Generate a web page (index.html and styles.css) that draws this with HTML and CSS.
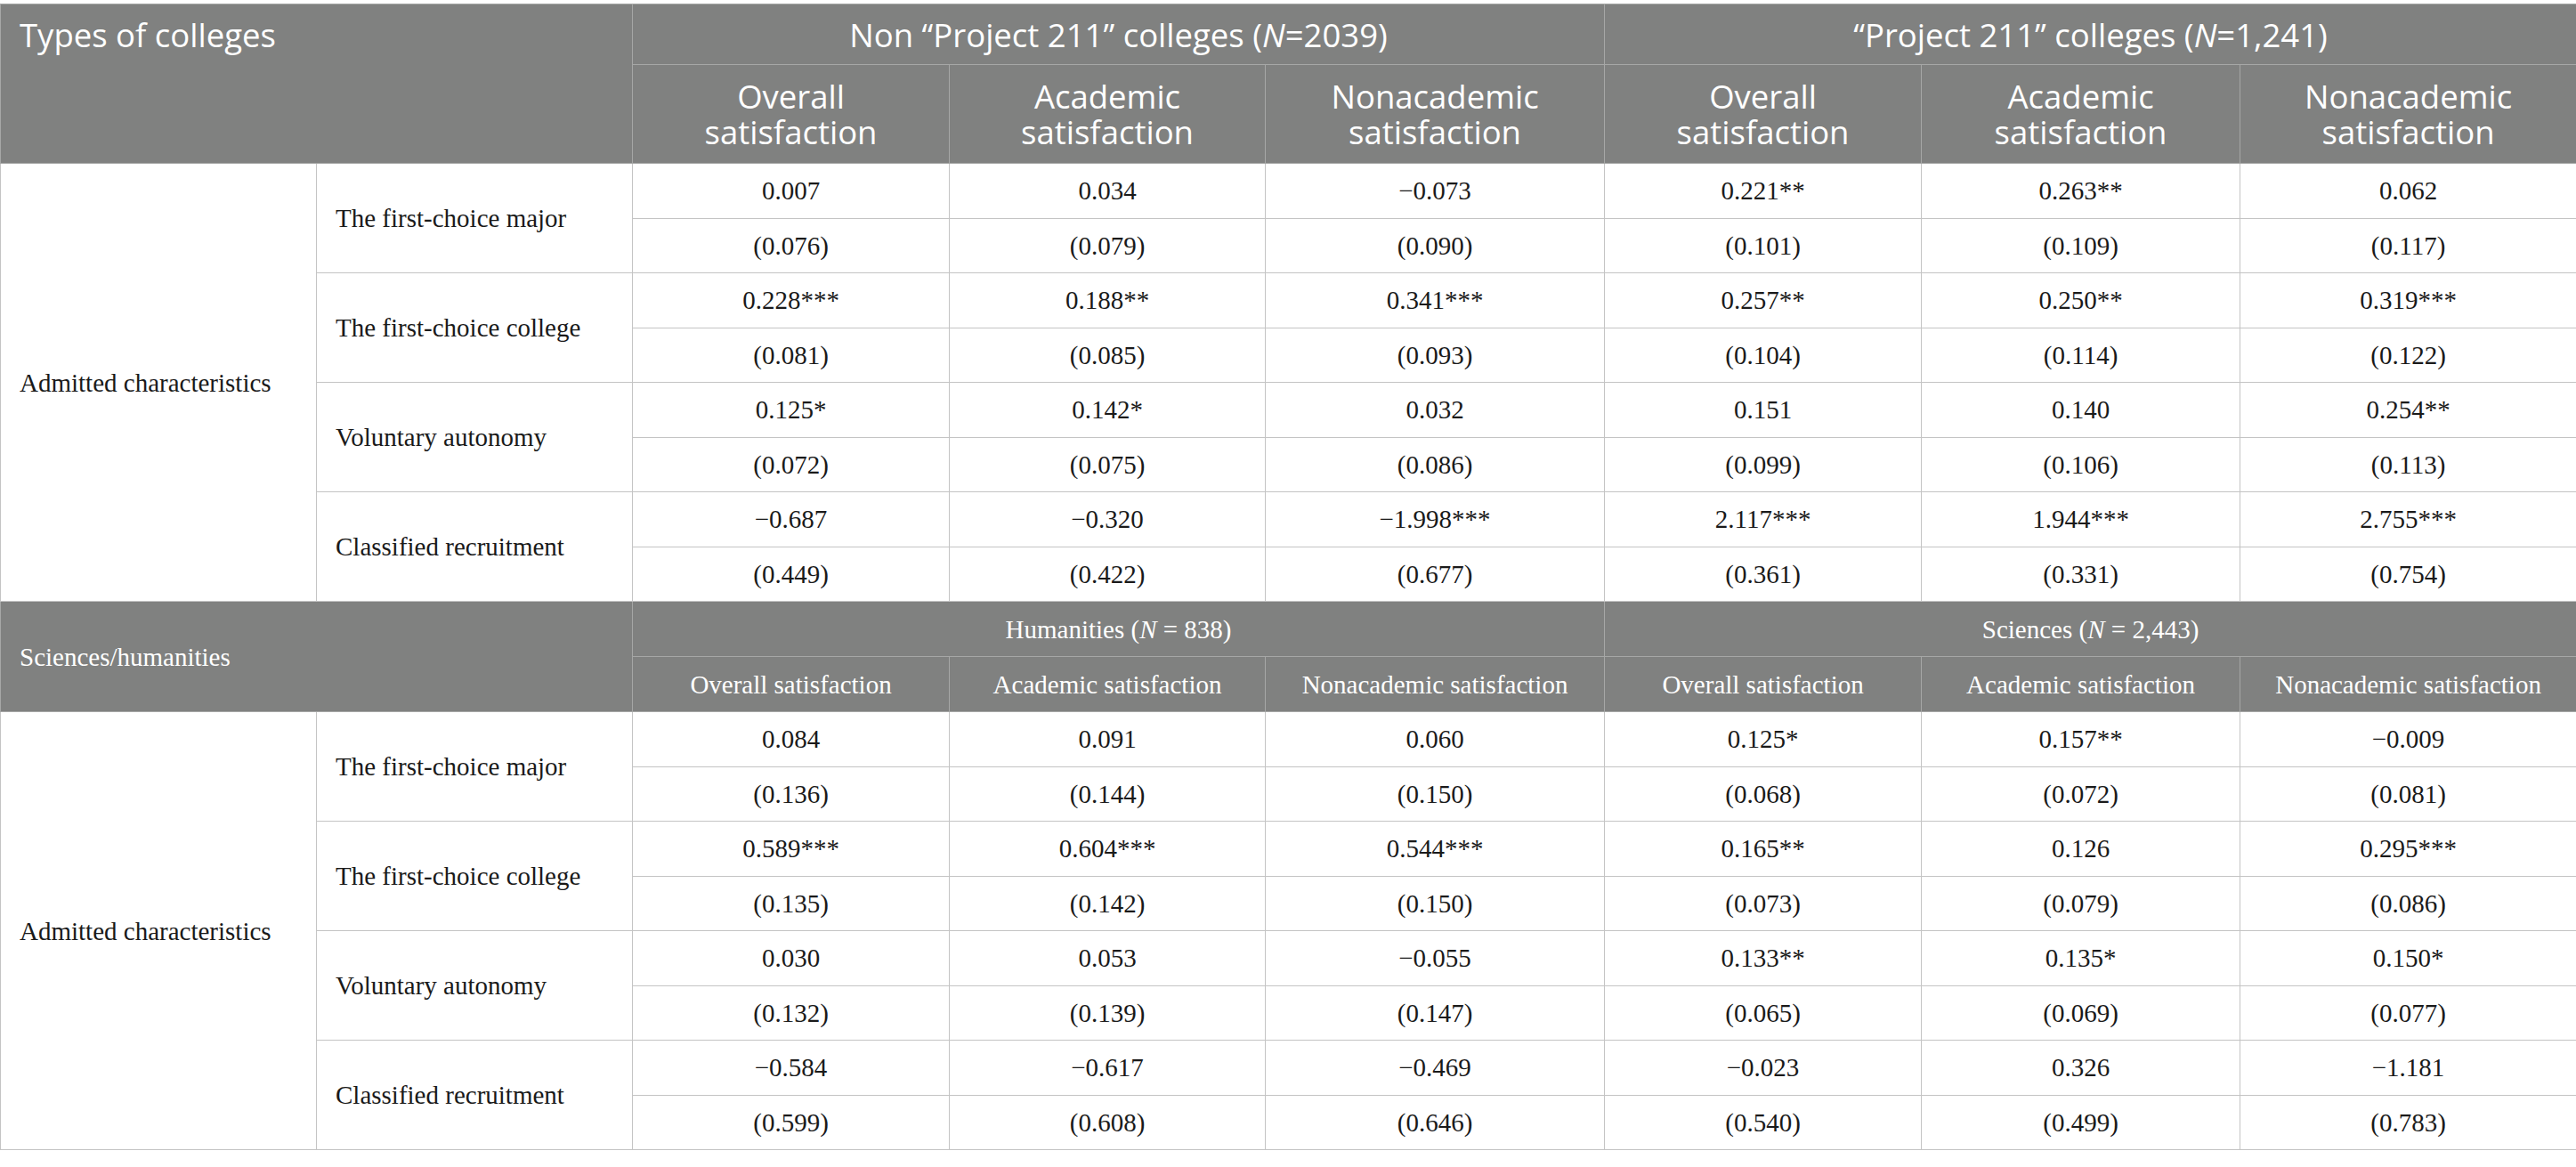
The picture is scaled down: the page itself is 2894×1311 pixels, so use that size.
FILE: index.html
```html
<!DOCTYPE html>
<html lang="en">
<head>
<meta charset="utf-8">
<title>Admitted characteristics and satisfaction</title>
<link rel="stylesheet" href="styles.css">
</head>
<body>
<table class="tbl">
  <colgroup>
    <col class="c1"><col class="c2"><col class="c3"><col class="c4"><col class="c5"><col class="c6"><col class="c7"><col class="c8">
  </colgroup>
  <thead>
    <tr class="hrow1">
      <th class="corner" colspan="2" rowspan="2">Types of colleges</th>
      <th colspan="3">Non “Project 211” colleges (<i>N</i>=2039)</th>
      <th colspan="3">“Project 211” colleges (<i>N</i>=1,241)</th>
    </tr>
    <tr class="hrow2">
      <th>Overall<br>satisfaction</th>
      <th>Academic<br>satisfaction</th>
      <th>Nonacademic<br>satisfaction</th>
      <th>Overall<br>satisfaction</th>
      <th>Academic<br>satisfaction</th>
      <th>Nonacademic<br>satisfaction</th>
    </tr>
  </thead>
  <tbody class="body">
    <tr><td class="grp" rowspan="8">Admitted characteristics</td><td class="lab" rowspan="2">The first-choice major</td><td>0.007</td><td>0.034</td><td>−0.073</td><td>0.221**</td><td>0.263**</td><td>0.062</td></tr>
    <tr><td>(0.076)</td><td>(0.079)</td><td>(0.090)</td><td>(0.101)</td><td>(0.109)</td><td>(0.117)</td></tr>
    <tr><td class="lab" rowspan="2">The first-choice college</td><td>0.228***</td><td>0.188**</td><td>0.341***</td><td>0.257**</td><td>0.250**</td><td>0.319***</td></tr>
    <tr><td>(0.081)</td><td>(0.085)</td><td>(0.093)</td><td>(0.104)</td><td>(0.114)</td><td>(0.122)</td></tr>
    <tr><td class="lab" rowspan="2">Voluntary autonomy</td><td>0.125*</td><td>0.142*</td><td>0.032</td><td>0.151</td><td>0.140</td><td>0.254**</td></tr>
    <tr><td>(0.072)</td><td>(0.075)</td><td>(0.086)</td><td>(0.099)</td><td>(0.106)</td><td>(0.113)</td></tr>
    <tr><td class="lab" rowspan="2">Classified recruitment</td><td>−0.687</td><td>−0.320</td><td>−1.998***</td><td>2.117***</td><td>1.944***</td><td>2.755***</td></tr>
    <tr><td>(0.449)</td><td>(0.422)</td><td>(0.677)</td><td>(0.361)</td><td>(0.331)</td><td>(0.754)</td></tr>
  </tbody>
  <tbody class="sec">
    <tr>
      <th class="corner2" colspan="2" rowspan="2">Sciences/humanities</th>
      <th colspan="3">Humanities (<i>N</i> = 838)</th>
      <th colspan="3">Sciences (<i>N</i> = 2,443)</th>
    </tr>
    <tr>
      <th>Overall satisfaction</th>
      <th>Academic satisfaction</th>
      <th>Nonacademic satisfaction</th>
      <th>Overall satisfaction</th>
      <th>Academic satisfaction</th>
      <th>Nonacademic satisfaction</th>
    </tr>
  </tbody>
  <tbody class="body">
    <tr><td class="grp" rowspan="8">Admitted characteristics</td><td class="lab" rowspan="2">The first-choice major</td><td>0.084</td><td>0.091</td><td>0.060</td><td>0.125*</td><td>0.157**</td><td>−0.009</td></tr>
    <tr><td>(0.136)</td><td>(0.144)</td><td>(0.150)</td><td>(0.068)</td><td>(0.072)</td><td>(0.081)</td></tr>
    <tr><td class="lab" rowspan="2">The first-choice college</td><td>0.589***</td><td>0.604***</td><td>0.544***</td><td>0.165**</td><td>0.126</td><td>0.295***</td></tr>
    <tr><td>(0.135)</td><td>(0.142)</td><td>(0.150)</td><td>(0.073)</td><td>(0.079)</td><td>(0.086)</td></tr>
    <tr><td class="lab" rowspan="2">Voluntary autonomy</td><td>0.030</td><td>0.053</td><td>−0.055</td><td>0.133**</td><td>0.135*</td><td>0.150*</td></tr>
    <tr><td>(0.132)</td><td>(0.139)</td><td>(0.147)</td><td>(0.065)</td><td>(0.069)</td><td>(0.077)</td></tr>
    <tr><td class="lab" rowspan="2">Classified recruitment</td><td>−0.584</td><td>−0.617</td><td>−0.469</td><td>−0.023</td><td>0.326</td><td>−1.181</td></tr>
    <tr><td>(0.599)</td><td>(0.608)</td><td>(0.646)</td><td>(0.540)</td><td>(0.499)</td><td>(0.783)</td></tr>
  </tbody>
</table>
</body>
</html>
```
FILE: styles.css
```css
html, body {
  margin: 0;
  padding: 0;
  background: #ffffff;
}

body {
  padding-top: 4px;
}

.tbl {
  width: 2894px;
  table-layout: fixed;
  border-collapse: collapse;
  font-family: "Liberation Serif", "Times New Roman", serif;
  color: #1a1a1a;
}

.c1 { width: 355px; }
.c2 { width: 355px; }
.c3 { width: 356px; }
.c4 { width: 355px; }
.c5 { width: 381px; }
.c6 { width: 356px; }
.c7 { width: 358px; }
.c8 { width: 378px; }

.tbl th,
.tbl td {
  border: 1px solid #c4c4c4;
  padding: 0 8px;
  text-align: center;
  vertical-align: middle;
  font-weight: normal;
}

.tbl th {
  background: #808180;
  color: #ffffff;
  border-color: #a6a7a6;
}

.tbl thead th {
  font-family: "Open Sans", "Liberation Sans", sans-serif;
  font-size: 36.5px;
  line-height: 40px;
}

.hrow1 th { height: 67px; }
.hrow2 th { height: 110px; }

.tbl thead th.corner {
  text-align: left;
  vertical-align: top;
  padding: 14px 21px 0;
}

.body td {
  height: 60.5px;
  font-size: 29px;
  line-height: 34px;
}

.body td.grp,
.body td.lab {
  text-align: left;
  padding-left: 21px;
}

.sec th {
  height: 61px;
  font-size: 29px;
  line-height: 34px;
}

.sec th.corner2 {
  text-align: left;
  padding-left: 21px;
}
```
